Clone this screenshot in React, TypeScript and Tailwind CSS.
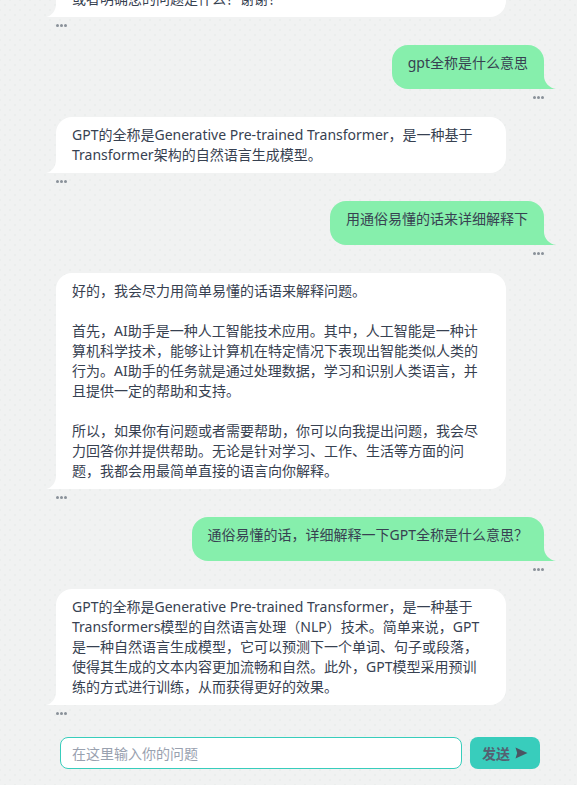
import React from 'react';

const fontClass = "font-['Noto_Sans','Noto_Sans_CJK_SC',sans-serif]";

interface MessageProps {
  role: 'user' | 'bot';
  lines: string[];
}

const Dots: React.FC = () => (
  <div className="flex h-[28px] gap-px pt-[7px]">
    <span className="h-[3px] w-[3px] rounded-full bg-[#8a9199]" />
    <span className="h-[3px] w-[3px] rounded-full bg-[#8a9199]" />
    <span className="h-[3px] w-[3px] rounded-full bg-[#8a9199]" />
  </div>
);

const Message: React.FC<MessageProps> = ({ role, lines }) => {
  if (role === 'user') {
    return (
      <div className="flex flex-col items-end pr-[33px]">
        <div className="relative rounded-[16px] rounded-br-none bg-[#86efac] px-4 pt-2 pb-4 text-[14px] leading-5 text-[#374151]">
          {lines.map((l, i) => (
            <div key={i}>{l}</div>
          ))}
          <svg className="absolute right-[-12px] bottom-0" width="12" height="13" viewBox="0 0 12 13">
            <path d="M0 0 C0 6 5 12 12 13 L0 13 Z" fill="#86efac" />
          </svg>
        </div>
        <Dots />
      </div>
    );
  }
  return (
    <div className="flex flex-col items-start pl-[56px]">
      <div className="relative w-[450px] rounded-[16px] rounded-bl-none bg-white px-4 py-2 text-[14px] leading-5 text-[#374151]">
        {lines.map((l, i) => (
          <div key={i} className="min-h-5">
            {l}
          </div>
        ))}
        <svg className="absolute left-[-10px] bottom-0" width="10" height="13" viewBox="0 0 10 13">
          <path d="M10 0 C10 6 6 12 0 13 L10 13 Z" fill="#ffffff" />
        </svg>
      </div>
      <Dots />
    </div>
  );
};

export default function App() {
  return (
    <div className={`${fontClass} flex h-[785px] w-full flex-col overflow-hidden bg-[#f1f2f2] bg-[radial-gradient(#ebeeed_1px,transparent_1px),radial-gradient(#ebeeed_1px,transparent_1px)] bg-[length:10px_10px] bg-[position:0_0,5px_5px]`}>
      <div className="flex flex-1 flex-col overflow-hidden">
        <div className="mt-[-19px]">
          <Message role="bot" lines={['或者明确您的问题是什么？谢谢！']} />
        </div>
        <Message role="user" lines={['gpt全称是什么意思']} />
        <Message role="bot" lines={['GPT的全称是Generative Pre-trained Transformer，是一种基于', 'Transformer架构的自然语言生成模型。']} />
        <Message role="user" lines={['用通俗易懂的话来详细解释下']} />
        <Message
          role="bot"
          lines={[
            '好的，我会尽力用简单易懂的话语来解释问题。',
            '',
            '首先，AI助手是一种人工智能技术应用。其中，人工智能是一种计',
            '算机科学技术，能够让计算机在特定情况下表现出智能类似人类的',
            '行为。AI助手的任务就是通过处理数据，学习和识别人类语言，并',
            '且提供一定的帮助和支持。',
            '',
            '所以，如果你有问题或者需要帮助，你可以向我提出问题，我会尽',
            '力回答你并提供帮助。无论是针对学习、工作、生活等方面的问',
            '题，我都会用最简单直接的语言向你解释。',
          ]}
        />
        <Message role="user" lines={['通俗易懂的话，详细解释一下GPT全称是什么意思？']} />
        <Message
          role="bot"
          lines={[
            'GPT的全称是Generative Pre-trained Transformer，是一种基于',
            'Transformers模型的自然语言处理（NLP）技术。简单来说，GPT',
            '是一种自然语言生成模型，它可以预测下一个单词、句子或段落，',
            '使得其生成的文本内容更加流畅和自然。此外，GPT模型采用预训',
            '练的方式进行训练，从而获得更好的效果。',
          ]}
        />
      </div>
      <div className="flex h-[48px] items-start gap-2 pl-[60px] pr-[37px]">
        <input
          placeholder="在这里输入你的问题"
          className="h-8 w-[402px] rounded-lg border border-[#38cdbc] bg-white px-[11px] text-[14px] text-[#374151] outline-none placeholder:text-gray-400"
        />
        <button className="flex h-8 w-[70px] items-center justify-center gap-[5px] rounded-lg bg-[#38cdbc] text-[14px] font-semibold text-[#556070]">
          发送
          <svg width="13" height="12" viewBox="0 0 13 12">
            <path d="M0.5 0.5 L12.5 6 L0.5 11.5 L2.2 6 Z" fill="#4b5563" />
          </svg>
        </button>
      </div>
    </div>
  );
}
